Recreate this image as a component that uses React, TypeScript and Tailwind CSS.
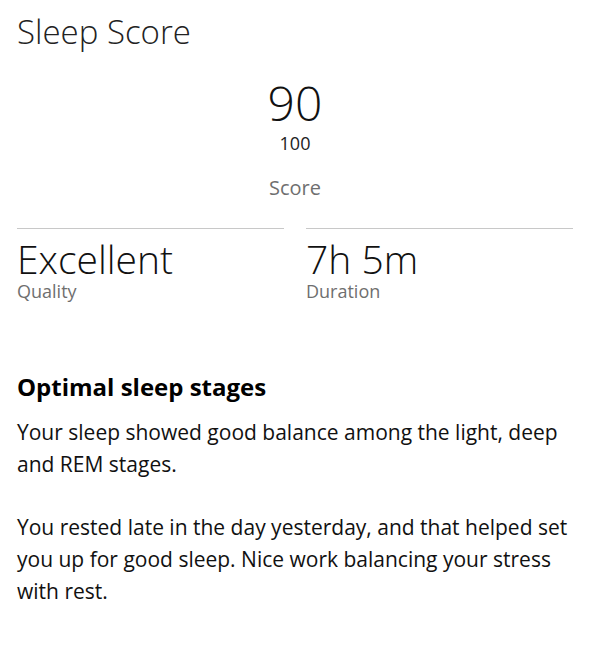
export default function App() {
  return (
    <div
      className="min-h-[645px] bg-white text-[#111]"
      style={{ fontFamily: '"Open Sans", "Noto Sans", sans-serif' }}
    >
      <div className="ml-[17px] w-[556px] pt-[9px]">
        <h1 className="text-[33px] font-light leading-[46px] text-[#222]">Sleep Score</h1>

        <div className="mt-[21px] flex flex-col items-center">
          <div className="text-[48px] font-light leading-[54px] text-[#111]">90</div>
          <div className="mt-[2px] text-[18px] leading-[22px] text-[#222]">100</div>
          <div className="mt-[21px] text-[20px] leading-[26px] text-[#6f6f6f]">Score</div>
        </div>

        <div className="mt-[27px] grid grid-cols-2 gap-[22px]">
          <Stat value="Excellent" label="Quality" />
          <Stat value="7h 5m" label="Duration" />
        </div>

        <div className="mt-[69px]">
          <h2 className="text-[24px] font-bold leading-[32px] text-black">Optimal sleep stages</h2>
          <p className="mt-[13px] text-[21px] leading-[32px] text-[#111]">
            Your sleep showed good balance among the light, deep and REM stages.
          </p>
          <p className="mt-[31px] text-[21px] leading-[32px] text-[#111]">
            You rested late in the day yesterday, and that helped set you up for good sleep. Nice work
            balancing your stress with rest.
          </p>
        </div>
      </div>
    </div>
  );
}

function Stat({ value, label }: { value: string; label: string }) {
  return (
    <div className="border-t border-[#c8c8c8] pt-[8px]">
      <div className="text-[39px] font-light leading-[43px] text-[#111]">{value}</div>
      <div className="text-[18px] leading-[22px] text-[#6f6f6f]">{label}</div>
    </div>
  );
}
